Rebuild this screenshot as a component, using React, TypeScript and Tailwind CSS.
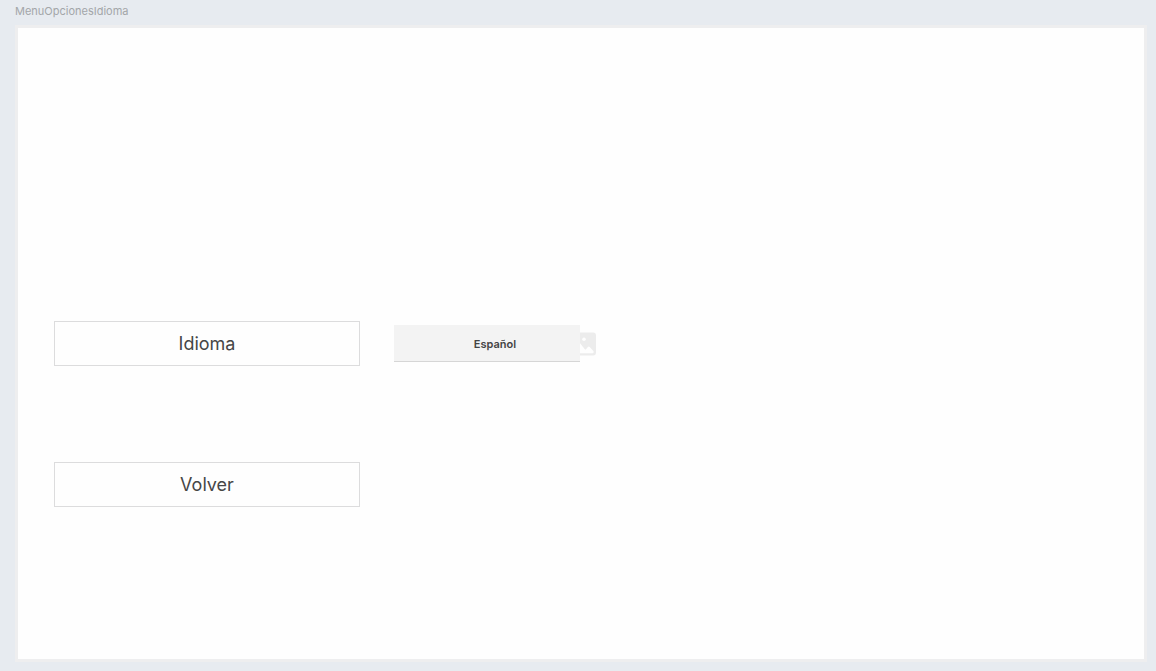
import React from "react";

function MenuButton({ children }: { children: React.ReactNode }) {
  return (
    <button
      type="button"
      className="h-[45px] w-[306px] border border-[#dcdcdd] bg-[#fefefe] text-lg text-[#464646]"
    >
      {children}
    </button>
  );
}

function PictureIcon() {
  return (
    <svg
      viewBox="0 0 24 24"
      className="-ml-2 size-6 shrink-0"
      aria-hidden="true"
    >
      <rect x="0" y="0.5" width="24" height="23" rx="3" fill="#ececec" />
      <circle cx="12" cy="7.3" r="1.8" fill="#fefefe" />
      <path
        d="M2.5 17 L6.2 11.4 Q7.2 10.2 8.3 11.4 L12.6 17 Q13.5 18 14.3 17 L15.8 14.9 Q16.7 14 17.7 14.9 L21.6 19.2 V20.2 Q21.6 21.2 20.6 21.2 H2.5 Z"
        fill="#fefefe"
      />
    </svg>
  );
}

export default function App() {
  return (
    <div className="flex min-h-screen flex-col bg-[#e7ebf0] pr-[9px] pb-[9px] pl-[15px] font-['Inter',sans-serif]">
      <h1 className="pt-[3px] pb-1.5 text-[11px] leading-4 text-[#a3a6a9]">
        MenuOpcionesIdioma
      </h1>
      <main className="flex grow flex-col items-start gap-24 border-[3px] border-[#eeeeef] bg-[#fefefe] px-9 pt-[293px] pb-8">
        <div className="flex items-center">
          <MenuButton>Idioma</MenuButton>
          <div className="ml-[34px] flex items-center">
            <button
              type="button"
              className="relative h-[37px] w-[186px] border-b border-[#d6d6d6] bg-[#f3f3f3] pt-0.5 pl-4 text-[11px] font-semibold text-[#444444]"
            >
              Español
            </button>
            <PictureIcon />
          </div>
        </div>
        <MenuButton>Volver</MenuButton>
      </main>
    </div>
  );
}
